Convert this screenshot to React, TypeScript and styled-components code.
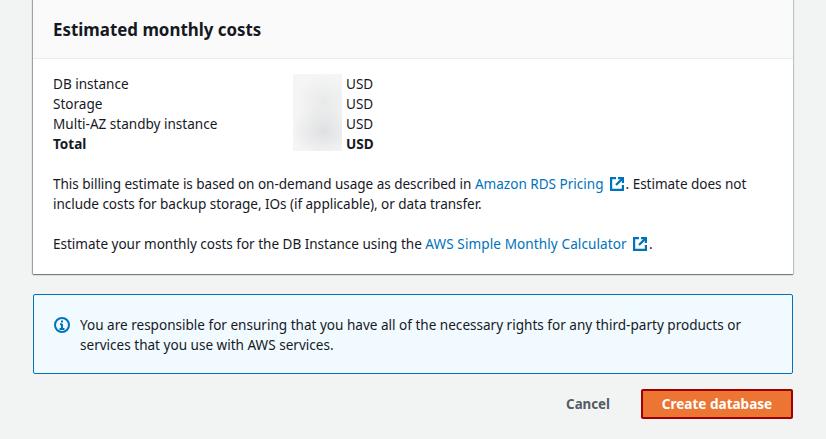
import React from "react";
import styled, { createGlobalStyle } from "styled-components";

const Global = createGlobalStyle`
  html, body { margin: 0; padding: 0; background: #f2f3f3; }
  body { font-family: "Noto Sans", "Open Sans", sans-serif; font-size: 13.55px; line-height: 20px; color: #16191f; overflow: hidden; }
`;
const Page = styled.div`
  width: 826px; height: 439px; box-sizing: border-box; padding: 0 33px; display: flex; flex-direction: column;
`;
const Card = styled.section`
  background: #fff; height: 274px; box-sizing: border-box; box-shadow: 0 1px 1px 0 rgba(0,28,36,.5), 1px 0 1px 0 rgba(0,28,36,.15), -1px 0 1px 0 rgba(0,28,36,.3);
`;
const CardHeader = styled.header`
  height: 59px; box-sizing: border-box; padding: 19px 20px 0; background: #fafafa; border-bottom: 1px solid #eaeded;
`;
const Title = styled.h2`
  margin: 0; font-size: 16.9px; line-height: 22px; font-weight: 700; color: #16191f;
`;
const CardBody = styled.div`
  padding: 15px 20px 0;
`;
const CostTable = styled.div`
  position: relative; display: grid; grid-template-columns: 293px auto; justify-content: start; margin-bottom: 20px;
`;
const Cell = styled.div<{ $bold?: boolean }>`
  font-weight: ${p => (p.$bold ? 700 : 400)};
`;
const Blur = styled.div`
  position: absolute; left: 240px; top: 0; width: 49px; height: 77px;
  background:
    radial-gradient(ellipse 32px 26px at 62% 74%, #dfe0e2 0%, rgba(223,224,226,0) 100%),
    radial-gradient(ellipse 28px 26px at 64% 36%, #e8e9e9 0%, rgba(232,233,233,0) 100%),
    #f5f5f5;
`;
const Paragraph = styled.p<{ $spacing: string }>`
  margin: 0 0 20px; letter-spacing: ${p => p.$spacing};
`;
const Link = styled.a<{ $spacing: string }>`
  color: #0073bb; text-decoration: none; letter-spacing: ${p => p.$spacing};
`;
const ExtIcon = styled.svg`
  width: 14px; height: 14px; margin: 0 2px 0 2.5px; vertical-align: -2px;
`;
const Alert = styled.div`
  margin-top: 20px; height: 80px; box-sizing: border-box; display: flex; gap: 10px; padding: 20px 20px 0;
  background: #f1faff; border: 1px solid #0073bb; border-radius: 2px;
`;
const InfoIcon = styled.svg`
  flex: none; width: 16px; height: 16px; margin-top: 2px;
`;
const AlertText = styled.div`
  flex: 1; max-width: 680px;
`;
const Actions = styled.div`
  margin-top: 15px; display: flex; justify-content: flex-end; align-items: center; gap: 31px;
`;
const Cancel = styled.button`
  background: none; border: 0; padding: 0; font: 700 13.3px/20px "Noto Sans", "Open Sans", sans-serif; color: #545b64;
`;
const Primary = styled.button`
  width: 152px; height: 30px; box-sizing: border-box; background: #ec7533; border: 2px solid #9c0000; border-radius: 2px; color: #fff;
  font: 700 13.55px/20px "Noto Sans", "Open Sans", sans-serif; padding: 0;
`;

const External = () => (
  <ExtIcon viewBox="0 0 14 14" fill="none" stroke="#0073bb" strokeWidth="2.2">
    <path d="M6 1.1H1.1v11.8h11.8V8" />
    <path d="M8 1.1h4.9V6" />
    <path d="M12.6 1.4L6 8" />
  </ExtIcon>
);

const rows = [
  ["DB instance", "USD"],
  ["Storage", "USD"],
  ["Multi-AZ standby instance", "USD"],
];

export default function App() {
  return (
    <Page>
      <Global />
      <Card>
        <CardHeader><Title>Estimated monthly costs</Title></CardHeader>
        <CardBody>
          <CostTable>
            {rows.map(([n, v]) => (
              <React.Fragment key={n}>
                <Cell>{n}</Cell>
                <Cell>{v}</Cell>
              </React.Fragment>
            ))}
            <Cell $bold>Total</Cell>
            <Cell $bold>USD</Cell>
            <Blur />
          </CostTable>
          <Paragraph $spacing="-0.04px">
            This billing estimate is based on on-demand usage as described in <Link href="#" $spacing="0">Amazon RDS Pricing <External /></Link>. Estimate does not include costs for backup storage, IOs (if applicable), or data transfer.
          </Paragraph>
          <Paragraph $spacing="-0.02px">
            Estimate your monthly costs for the DB Instance using the <Link href="#" $spacing="0.1px">AWS Simple Monthly Calculator <External /></Link>.
          </Paragraph>
        </CardBody>
      </Card>
      <Alert>
        <InfoIcon viewBox="0 0 16 16" fill="none" stroke="#0073bb" strokeWidth="2">
          <circle cx="8" cy="8" r="7" />
          <path d="M8 7v5M5.5 12h5M6 7.2h2" />
          <path d="M8 3.5v2" />
        </InfoIcon>
        <AlertText>You are responsible for ensuring that you have all of the necessary rights for any third-party products or services that you use with AWS services.</AlertText>
      </Alert>
      <Actions>
        <Cancel>Cancel</Cancel>
        <Primary>Create database</Primary>
      </Actions>
    </Page>
  );
}
